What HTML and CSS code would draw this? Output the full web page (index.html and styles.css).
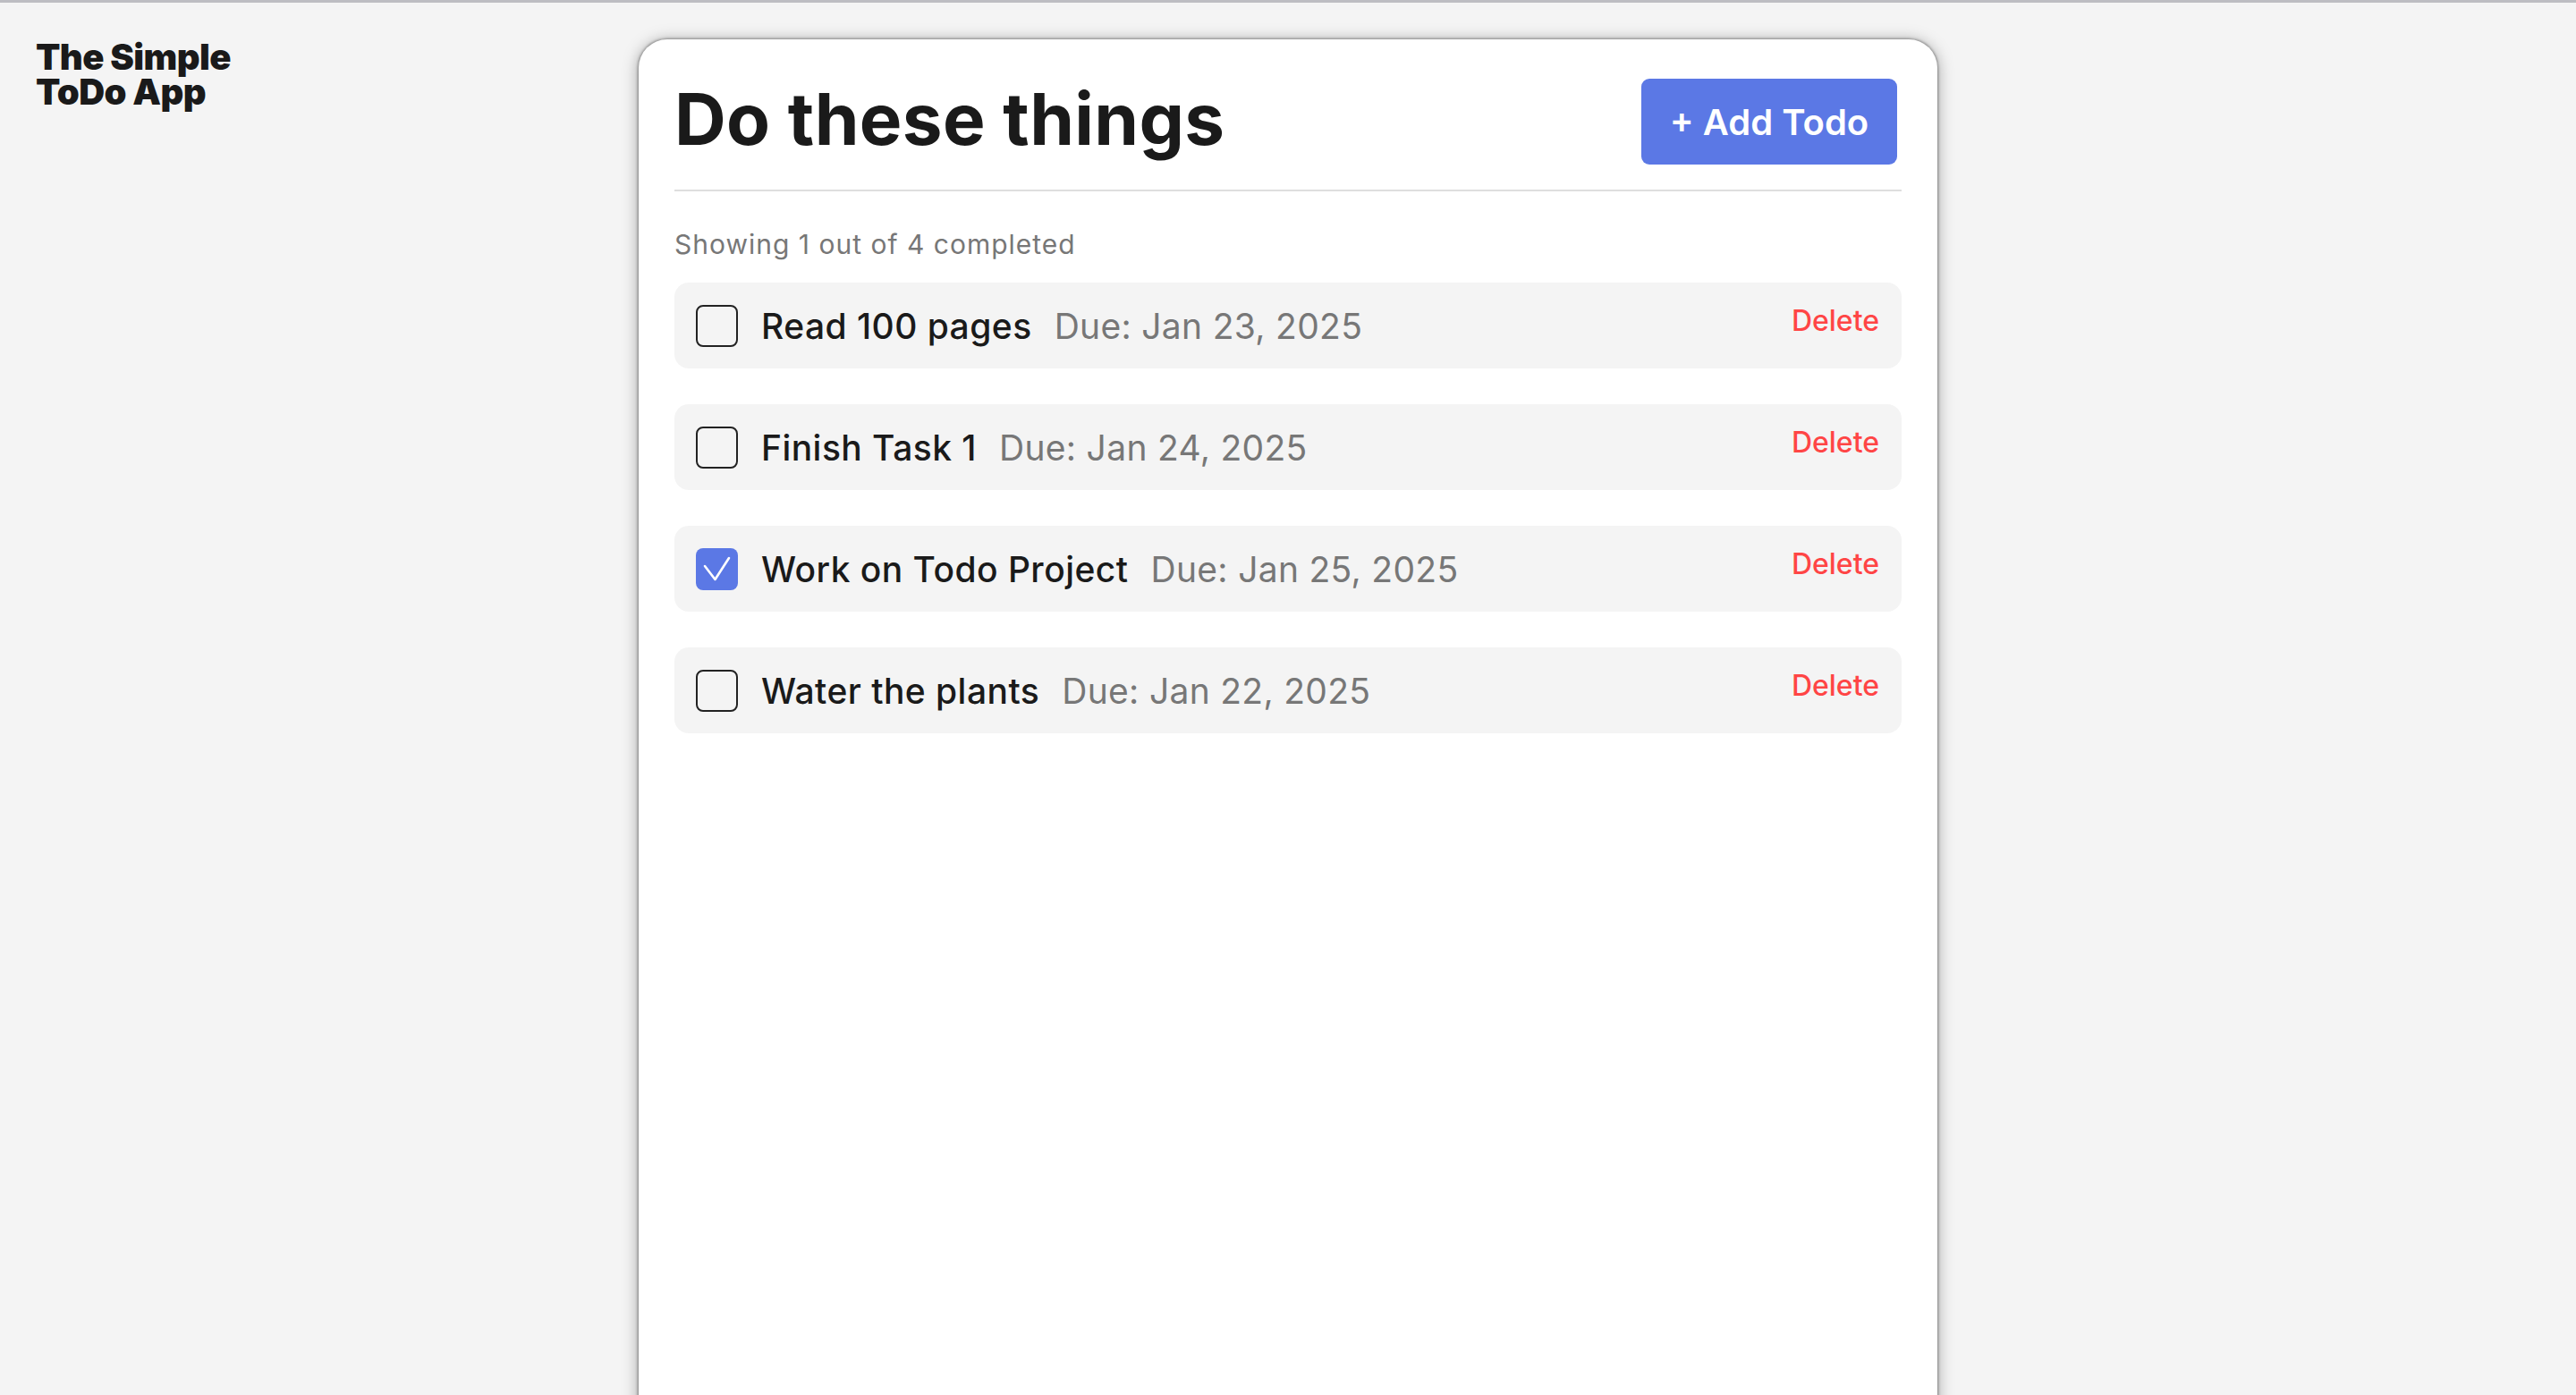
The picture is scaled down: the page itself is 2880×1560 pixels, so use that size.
FILE: index.html
```html
<!DOCTYPE html>
<html lang="en">
<head>
<meta charset="utf-8">
<title>The Simple ToDo App</title>
<link rel="stylesheet" href="styles.css">
</head>
<body>
<div class="page">
  <aside class="brand">
    <div class="logo"><span class="logo-line">The Simple</span><span class="logo-line">ToDo App</span></div>
  </aside>
  <main class="card">
    <header class="card-header">
      <h1 class="title">Do these things</h1>
      <button class="add-btn">+ Add Todo</button>
    </header>
    <p class="summary">Showing 1 out of 4 completed</p>
    <ul class="todo-list">
      <li class="todo">
        <span class="check"></span>
        <span class="todo-name">Read 100 pages</span>
        <span class="todo-due">Due: Jan 23, 2025</span>
        <button class="delete">Delete</button>
      </li>
      <li class="todo">
        <span class="check"></span>
        <span class="todo-name">Finish Task 1</span>
        <span class="todo-due">Due: Jan 24, 2025</span>
        <button class="delete">Delete</button>
      </li>
      <li class="todo">
        <span class="check checked"><svg viewBox="0 0 46 46" width="46" height="46"><path d="M10 20 L21.5 35 L37 11" fill="none" stroke="#fff" stroke-width="2.6" stroke-linecap="round" stroke-linejoin="round"/></svg></span>
        <span class="todo-name">Work on Todo Project</span>
        <span class="todo-due">Due: Jan 25, 2025</span>
        <button class="delete">Delete</button>
      </li>
      <li class="todo">
        <span class="check"></span>
        <span class="todo-name">Water the plants</span>
        <span class="todo-due">Due: Jan 22, 2025</span>
        <button class="delete">Delete</button>
      </li>
    </ul>
  </main>
  <div class="spacer"></div>
</div>
</body>
</html>
```

FILE: styles.css
```css
* { box-sizing: border-box; }

html, body {
  margin: 0;
  padding: 0;
  height: 100%;
  overflow: hidden;
}

body {
  background: #f4f4f4;
  border-top: 3px solid #bdbdc2;
  font-family: Inter, "Noto Sans", "Liberation Sans", sans-serif;
  color: #1a1a1a;
}

.page {
  display: grid;
  grid-template-columns: 1fr 1452px 1fr;
  align-items: start;
}

.brand {
  padding: 41px 0 0 40px;
}

.logo {
  display: flex;
  flex-direction: column;
  font-size: 40px;
  font-weight: 900;
  letter-spacing: -0.6px;
  color: #1a1a1a;
}

.logo-line {
  display: block;
  height: 39px;
  line-height: 39px;
  white-space: nowrap;
}

.card {
  margin-top: 41px;
  background: #fff;
  border-radius: 32px 32px 0 0;
  min-height: 1700px;
  padding: 40px;
  box-shadow: 0 0 3px 1px rgba(0,0,0,0.35), 0 2px 18px rgba(0,0,0,0.35);
}

.card-header {
  display: flex;
  justify-content: space-between;
  align-items: flex-start;
  padding-bottom: 28px;
  border-bottom: 2px solid #dedede;
}

.title {
  margin: 0;
  font-size: 80px;
  font-weight: 700;
  line-height: 97px;
  letter-spacing: 0.35px;
  color: #1a1a1a;
}

.add-btn {
  margin-top: 4px;
  margin-right: 5px;
  width: 286px;
  height: 96px;
  padding: 0;
  border: 0;
  border-radius: 9px;
  background: #5b78e5;
  color: #fff;
  font-family: inherit;
  font-size: 40px;
  font-weight: 600;
}

.summary {
  margin: 42px 0 26px;
  font-size: 30px;
  line-height: 34px;
  letter-spacing: 1px;
  color: #777;
}

.todo-list {
  list-style: none;
  margin: 0;
  padding: 0;
  display: flex;
  flex-direction: column;
  gap: 40px;
}

.todo {
  height: 96px;
  display: flex;
  align-items: center;
  padding: 0 25px 0 24px;
  background: #f4f4f4;
  border-radius: 16px;
}

.check {
  width: 47px;
  height: 47px;
  flex: none;
  border: 2px solid #222;
  border-radius: 8px;
  display: flex;
}

.check.checked {
  border: 0;
  background: #5b78e5;
}

.check svg { display: block; }

.todo-name {
  margin-left: 26px;
  font-size: 39px;
  font-weight: 500;
  letter-spacing: 0.45px;
  color: #1a1a1a;
}

.todo-due {
  margin-left: 25px;
  font-size: 39px;
  font-weight: 400;
  letter-spacing: 0.3px;
  color: #777;
}

.delete {
  margin-left: auto;
  margin-bottom: 12px;
  padding: 0;
  border: 0;
  background: none;
  font-family: inherit;
  font-size: 32px;
  font-weight: 500;
  color: #ff4545;
}
```
